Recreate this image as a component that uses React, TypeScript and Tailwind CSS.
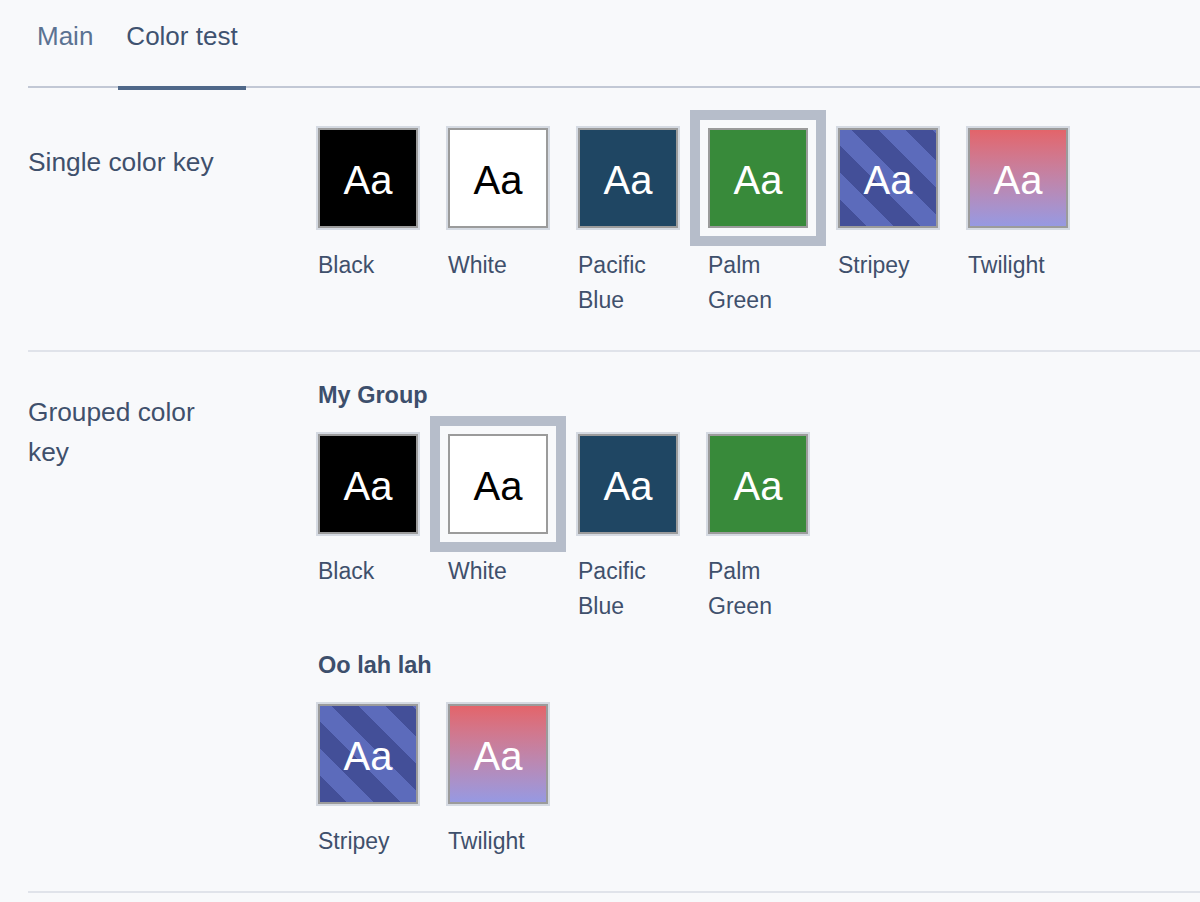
import React from "react";

type Sw = { name: string; kind: "black" | "white" | "blue" | "green" | "stripey" | "twilight" };

const fillClass: Record<Sw["kind"], string> = {
  black: "bg-black text-white",
  white: "bg-white text-black",
  blue: "bg-[#1f4663] text-white",
  green: "bg-[#388a3a] text-white",
  stripey:
    "bg-[repeating-linear-gradient(45deg,#434f98_0px,#434f98_19px,#5c6bbb_19px,#5c6bbb_38px)] text-white",
  twilight: "bg-linear-to-b from-[#e3646a] to-[#9699e2] text-white",
};

function Swatch({ sw, selected }: { sw: Sw; selected?: boolean }) {
  return (
    <div className="w-[104px] flex flex-col">
      <div
        className={
          selected
            ? "w-[104px] h-[104px] border-2 border-transparent outline-[10px] outline-solid outline-[#b6bdca] outline-offset-[6px]"
            : "w-[104px] h-[104px] border-2 border-[#d5dae2]"
        }
      >
        <div
          className={`w-full h-full border-2 border-[#9b9b9b] flex items-center justify-center text-[40px] leading-none ${fillClass[sw.kind]}`}
        >
          <span className="pt-[3px]">Aa</span>
        </div>
      </div>
      <div className="mt-[18px] pl-[2px] text-[23px] leading-[35px] text-[#3f506c]">{sw.name}</div>
    </div>
  );
}

const all: Sw[] = [
  { name: "Black", kind: "black" },
  { name: "White", kind: "white" },
  { name: "Pacific Blue", kind: "blue" },
  { name: "Palm Green", kind: "green" },
  { name: "Stripey", kind: "stripey" },
  { name: "Twilight", kind: "twilight" },
];

export default function App() {
  return (
    <div
      className="min-h-[902px] w-[1200px] bg-[#f8f9fb] text-[#3f506c]"
      style={{ fontFamily: '"Liberation Sans", Arial, Helvetica, sans-serif' }}
    >
      <div className="ml-[28px]">
        {/* Tabs */}
        <div className="flex items-start gap-[17px] border-b-2 border-[#c2c8d5] pl-[1px]">
          <div className="h-[86px] px-2 pt-[18px] text-[26px] leading-[36px] text-[#5b7292]">Main</div>
          <div className="h-[90px] -mb-[4px] px-2 pt-[18px] text-[26px] leading-[36px] text-[#3f5270] border-b-4 border-[#4f6889]">
            Color test
          </div>
        </div>

        {/* Row 1 */}
        <div className="grid grid-cols-[288px_1fr] border-b-2 border-[#e0e3ea]">
          <div className="pt-[54px] w-[200px] text-[26.3px] leading-[40px]">Single color key</div>
          <div className="pt-[38px] pb-[32px] flex gap-[26px]">
            {all.map((s) => (
              <Swatch key={s.name} sw={s} selected={s.kind === "green"} />
            ))}
          </div>
        </div>

        {/* Row 2 */}
        <div className="grid grid-cols-[288px_1fr] border-b-2 border-[#e0e3ea]">
          <div className="pt-[40px] w-[200px] text-[26.3px] leading-[40px]">Grouped color key</div>
          <div className="pt-[26px] pb-[32px] flex flex-col">
            <div className="pl-[2px] text-[23.5px] leading-[35px] font-bold text-[#3d4f6c]">My Group</div>
            <div className="mt-[19px] flex gap-[26px]">
              {all.slice(0, 4).map((s) => (
                <Swatch key={s.name} sw={s} selected={s.kind === "white"} />
              ))}
            </div>
            <div className="mt-[24px] pl-[2px] text-[23.5px] leading-[35px] font-bold text-[#3d4f6c]">Oo lah lah</div>
            <div className="mt-[19px] flex gap-[26px]">
              {all.slice(4).map((s) => (
                <Swatch key={s.name} sw={s} />
              ))}
            </div>
          </div>
        </div>
      </div>
    </div>
  );
}
